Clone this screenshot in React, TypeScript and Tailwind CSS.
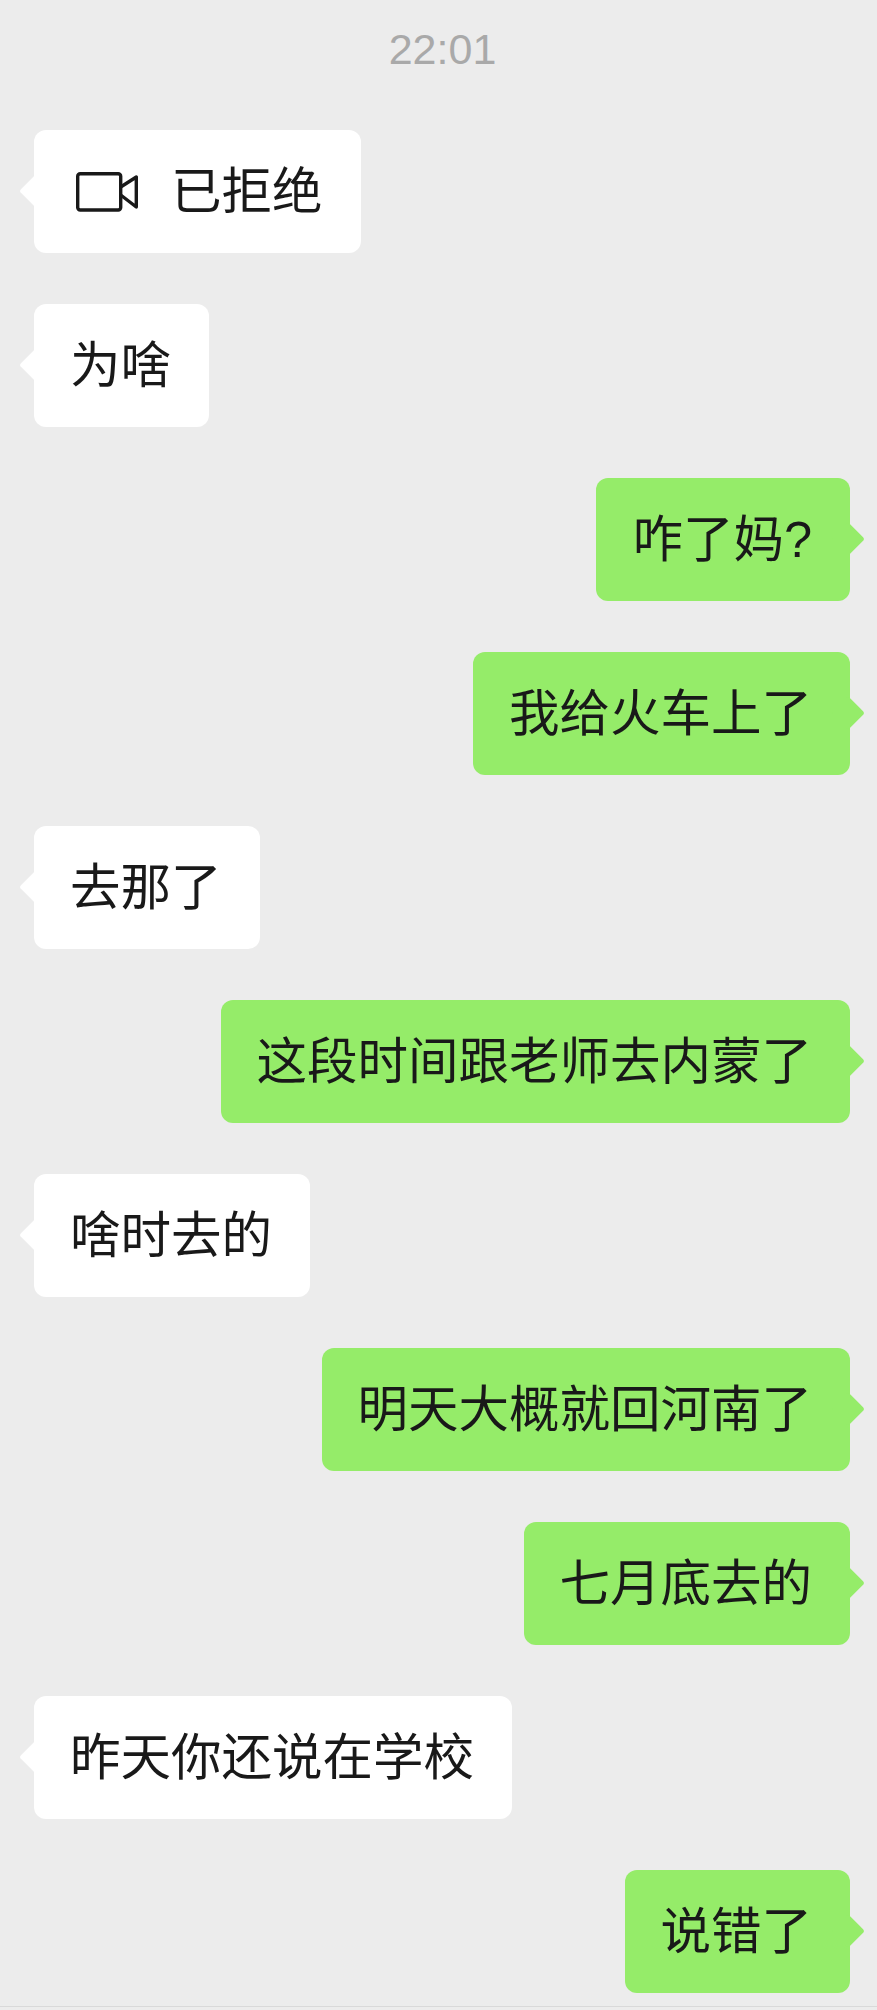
const messages = [
  { side: "left", text: "为啥" },
  { side: "right", text: "咋了妈?" },
  { side: "right", text: "我给火车上了" },
  { side: "left", text: "去那了" },
  { side: "right", text: "这段时间跟老师去内蒙了" },
  { side: "left", text: "啥时去的" },
  { side: "right", text: "明天大概就回河南了" },
  { side: "right", text: "七月底去的" },
  { side: "left", text: "昨天你还说在学校" },
  { side: "right", text: "说错了" },
];

function VideoIcon() {
  return (
    <svg width="62" height="40" viewBox="0 0 62 40" fill="none" stroke="#191919" strokeWidth="3.4" strokeLinejoin="round">
      <rect x="1.7" y="1.7" width="43" height="36.3" rx="2.5" />
      <path d="M44.7 15 L60.3 5 V35 L44.7 23" />
    </svg>
  );
}

function Bubble({ side, children }: { side: string; children: React.ReactNode }) {
  const isRight = side === "right";
  return (
    <div className={isRight ? "flex justify-end" : "flex justify-start"}>
      <div
        className={
          isRight
            ? "relative flex h-[123px] items-center rounded-[12px] bg-[#95ec69] pl-[36px] pr-[38px]"
            : "relative flex h-[123px] items-center rounded-[12px] bg-white pl-[36px] pr-[38px]"
        }
      >
        <span
          className={
            isRight
              ? "absolute right-[-10px] top-[49px] h-[24px] w-[24px] rotate-45 rounded-[3px] bg-[#95ec69]"
              : "absolute left-[-10px] top-[49px] h-[24px] w-[24px] rotate-45 rounded-[3px] bg-white"
          }
        />
        <div className="relative flex items-center pt-[2px] text-[50.5px] leading-none text-[#191919]">{children}</div>
      </div>
    </div>
  );
}

export default function App() {
  return (
    <div className="flex h-[2010px] w-[877px] flex-col overflow-hidden bg-[#ececec] font-['Liberation_Sans','Noto_Sans_CJK_SC',sans-serif]">
      <div className="flex h-[98px] items-center justify-center pl-[8px] text-[43px] text-[#a9a9a9]">22:01</div>
      <div className="flex flex-col gap-[51px] pl-[34px] pr-[27px] pt-[32px]">
        <Bubble side="left">
          <span className="ml-[6px] mr-[33px] mb-[2px] flex">
            <VideoIcon />
          </span>
          已拒绝
        </Bubble>
        {messages.map((m, i) => (
          <Bubble key={i} side={m.side}>
            {m.text}
          </Bubble>
        ))}
      </div>
      <div className="mt-auto h-[4px] border-t border-[#d9d9d9]" />
    </div>
  );
}
